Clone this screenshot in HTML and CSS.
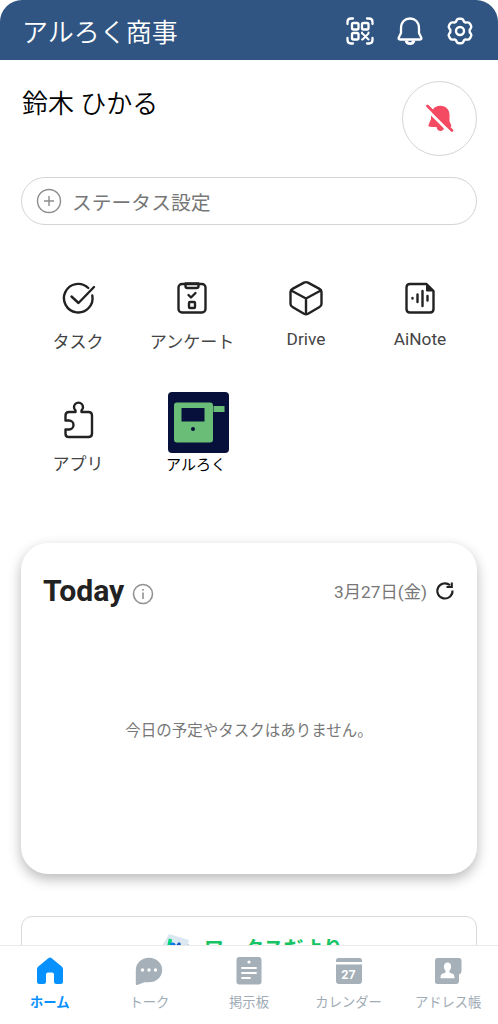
FILE: index.html
```html
<!DOCTYPE html>
<html lang="ja">
<head>
<meta charset="utf-8">
<title>ホーム</title>
<link rel="stylesheet" href="styles.css">
</head>
<body>
<div class="app">
  <header class="topbar">
    <h1 class="company">アルろく商事</h1>
    <div class="actions">
      <svg width="28" height="28" viewBox="0 0 28 28" fill="none" stroke="#fff" stroke-width="2.3" stroke-linecap="round">
        <path d="M1.5 7V5Q1.5 1.5 5 1.5H7M21 1.5h2Q26.500 1.500 26.500 5v2M26.500 21v2Q26.500 26.500 23 26.500h-2M7 26.500H5Q1.500 26.500 1.500 23v-2"/>
        <rect x="6" y="6" width="6.500" height="6.500" rx="1.500"/><rect x="16" y="6" width="6.500" height="6.500" rx="1.500"/><rect x="6" y="16" width="6.500" height="6.500" rx="1.500"/>
        <path stroke-width="2" d="M16 15.500v1M22.500 15.500v1M17 17l5 5M22 17l-5 5M16 22.500h.5M22.500 22.500h.2"/>
      </svg>
      <svg width="28" height="30" viewBox="0 0 28 30" fill="none" stroke="#fff" stroke-width="2.300" stroke-linejoin="round">
        <path d="M5 12.500C5 6 9 2.500 14 2.500S23 6 23 12.500V17l2.200 4.500q.8 2-1.200 2H4q-2 0-1.200-2L5 17Z"/>
        <path class="white" stroke="none" d="M8.500 24.500h11q-1 4.500-5.500 4.500t-5.500-4.500Z"/><path d="M12.500 25.500h3" stroke="#305582" stroke-width="1.300"/>
      </svg>
      <svg width="28" height="28" viewBox="0 0 28 28" fill="none" stroke="#fff" stroke-width="2.400" stroke-linejoin="round">
        <path d="M10.600 3.200Q11.200 1.700 13 1.700h2q1.800 0 2.400 1.500l.6 1.500 1.600.9 1.700-.2q1.700-.2 2.600 1.300l1 1.700q.9 1.600-.2 3l-1 1.400v2.400l1 1.400q1.100 1.400.2 3l-1 1.700q-.9 1.500-2.600 1.300l-1.700-.2-1.600.9-.6 1.500q-.6 1.500-2.400 1.500h-2q-1.800 0-2.400-1.500L10 23.300l-1.600-.9-1.700.2Q5 22.800 4.100 21.300l-1-1.700q-.9-1.600.2-3l1-1.400v-2.400l-1-1.400q-1.100-1.400-.2-3l1-1.700Q5 5.200 6.700 5.400l1.700.2L10 4.700Z"/><circle cx="14" cy="14" r="4"/>
      </svg>
    </div>
  </header>

  <main class="content">
    <section class="profile">
      <h2 class="user">鈴木 ひかる</h2>
      <button class="mute" aria-label="通知オフ">
        <svg width="30" height="30" viewBox="0 0 30 30">
          <path fill="#f44a62" d="M8 5.500C9.500 3 12 1.800 15.500 1.800c5.500 0 9 4 9 9.200v6.500l1.800 3.800q.5 1.700-1.300 1.700H7L4 22.500q-1-.5-.3-2L6 15V10ZM11.500 23h8q-.8 4-4 4t-4-4Z"/>
          <path stroke="#fff" stroke-width="3" d="M1 4.500L25.500 29"/>
          <path stroke="#f44a62" stroke-width="2.800" stroke-linecap="round" d="M2.500 2L27 26.500"/>
        </svg>
      </button>
    </section>

    <div class="status">
      <svg width="26" height="26" viewBox="0 0 26 26" fill="none" stroke="#8c8c8c" stroke-width="1.400"><circle cx="13" cy="13" r="11.500"/><path d="M13 8v10M8 13h10"/></svg>
      <span>ステータス設定</span>
    </div>

    <section class="shortcuts">
      <div class="shortcut">
        <svg class="line" viewBox="0 0 36 36"><path d="M32.300 15.500A14.300 14.300 0 1 1 28.300 8"/><path d="M11.500 16.500l7 6.500L34 7"/></svg>
        <span>タスク</span>
      </div>
      <div class="shortcut">
        <svg class="line" viewBox="0 0 36 36"><rect x="4.500" y="4" width="27" height="28.500" rx="3.500"/><path d="M11.500 3.500v2.500q0 2 2 2h9q2 0 2-2V3.500Z"/><path d="M14.500 15l2.500 2.500 4.500-4.500"/><rect x="15" y="22" width="6" height="6" rx="1"/></svg>
        <span>アンケート</span>
      </div>
      <div class="shortcut">
        <svg class="line" viewBox="0 0 36 36"><path d="M16 2.600q2-1 4 0l11.500 6.300q2 1 2 3V24q0 2-2 3L20 33.800q-2 1-4 0L4.500 27q-2-1-2-3V11.900q0-2 2-3ZM3.200 10.500L18 18.500l14.800-8M18 18.500V34"/></svg>
        <span class="latin">Drive</span>
      </div>
      <div class="shortcut">
        <svg class="line" viewBox="0 0 36 36"><path d="M24.500 4H8Q4.500 4 4.500 7.500v21.500q0 3.500 3.500 3.500h20q3.500 0 3.500-3.500V11Z"/><path fill="#222" stroke-width="1" d="M24.500 4v7h7Z"/><path d="M10.500 18v.5M15.500 14.500v7.500M20.500 11v15M25.500 16v4.500"/></svg>
        <span class="latin">AiNote</span>
      </div>
      <div class="shortcut">
        <svg class="line puzzle" viewBox="0 0 36 42"><path d="M15.500 13v-1.500a4.500 4.500 0 1 1 6 0v1.500h7q3.500 0 3.500 3.500v18q0 3.500-3.500 3.500h-20Q5.500 38 5.500 34.500v-4h3.500a4.500 4.500 0 1 0 0-9H5.500V16.500q0-3.500 3.500-3.500Z"/></svg>
        <span>アプリ</span>
      </div>
      <div class="shortcut shortcut-tile">
        <svg class="tile" viewBox="0 0 61 61"><rect width="61" height="61" rx="4" fill="#06103a"/><rect x="6" y="10.500" width="39" height="40" rx="3" fill="#6abd76"/><rect x="45.500" y="14" width="11" height="6" fill="#6abd76"/><rect x="13.500" y="16" width="23" height="13.500" fill="#06103a"/><circle cx="25" cy="37" r="2" fill="#06103a"/></svg>
        <span class="tile-label">アルろく</span>
      </div>
    </section>

    <section class="today">
      <div class="today-head">
        <h3>Today</h3>
        <svg class="info" width="22" height="22" viewBox="0 0 22 22" fill="none" stroke="#929292" stroke-width="1.600"><circle cx="11" cy="11" r="9.500"/><path d="M11 9.500V16M11 6v1.800"/></svg>
        <span class="date">3月27日(金)</span>
        <svg class="reload" width="20" height="20" viewBox="0 0 20 20" fill="none" stroke="#222" stroke-width="2.100"><path d="M17.500 9.500A7.600 7.600 0 1 1 15 4.300"/><path d="M16.800 1.500V6H11.500"/></svg>
      </div>
      <p class="empty">今日の予定やタスクはありません。</p>
    </section>

    <section class="banner">
      <svg width="34" height="36" viewBox="0 0 34 36"><path fill="#84939e" d="M22 9l10 3-6 24H14Z"/><path fill="#dbe7f1" d="M8 0l20 6-9 28L0 24V14Z"/><path stroke="#00d77b" stroke-width="3.400" d="M9.500 5L7 16"/><path stroke="#087be8" stroke-width="3.200" fill="none" d="M9.500 11q4-3 4 3"/><path stroke="#1459c8" stroke-width="3" d="M19 9l-6 7"/></svg>
      <span>ワークスだより</span>
    </section>
  </main>

  <nav class="tabs">
    <a class="tab active"><svg viewBox="0 0 28 28"><path d="M12.300 1.200q1.700-1.400 3.400 0l10 8.200q1.300 1 1.300 2.800v12.300q0 2.500-2.500 2.500h-4q-2.500 0-2.500-2.500V17.500q0-2-2-2h-4q-2 0-2 2v7q0 2.500-2.500 2.500h-4Q1 27 1 24.500V12.200q0-1.800 1.300-2.800Z"/></svg><span>ホーム</span></a>
    <a class="tab"><svg viewBox="0 0 28 28"><path d="M14 .8a13.200 12.200 0 0 1 0 24.400H9.500L2.200 28Q.8 28.200.8 27V13A13.200 12.200 0 0 1 14 .8Z"/><g fill="#fff"><circle cx="7.500" cy="13" r="1.700"/><circle cx="14" cy="13" r="1.700"/><circle cx="20.500" cy="13" r="1.700"/></g></svg><span>トーク</span></a>
    <a class="tab"><svg viewBox="0 0 28 28"><rect x="1.500" y="0" width="25" height="27.500" rx="3"/><circle cx="14" cy="5" r="1.600" fill="#fff"/><path stroke="#fff" stroke-width="1.900" stroke-linecap="round" d="M7 11h14M7 16h14M7 21h8"/></svg><span>掲示板</span></a>
    <a class="tab"><svg viewBox="0 0 28 28"><path d="M1 5V3.500Q1 1 3.500 1h21Q27 1 27 3.500V5ZM1 7.500h26V24q0 3-3 3H4q-3 0-3-3Z"/><text x="13.500" y="21.500" text-anchor="middle">27</text></svg><span>カレンダー</span></a>
    <a class="tab"><svg viewBox="0 0 28 28"><path d="M3 1h22q2.500 0 2.500 2.500V14.500q0 2-2.500 3V24q0 3-3 3H3.500q-2.500 0-2.500-2.500V3.500Q1 1 3 1Z"/><path fill="#fff" d="M13.500 5.500c2.500 0 3.600 1.800 3.600 4 0 2-.7 3.200-1.600 4v2l3.600 1.500q1.400.8 1.400 3.500v.8h-14v-.8q0-2.700 1.400-3.500l3.600-1.500v-2c-.9-.8-1.600-2-1.600-4 0-2.200 1.100-4 3.600-4Z"/></svg><span>アドレス帳</span></a>
  </nav>
</div>
</body>
</html>
```
FILE: styles.css
```css
* { box-sizing: border-box; }
body {
  margin: 0;
  background: #fff;
  color: #000;
  font-family: Roboto, "Noto Sans CJK JP", sans-serif;
}
h1, h2, h3, p { margin: 0; font-weight: 400; }
svg { display: block; flex: none; }
span { white-space: nowrap; }

.app { height: 1024px; display: flex; flex-direction: column; overflow: hidden; }

.topbar {
  flex: none;
  height: 60px;
  padding: 2px 24px 0 22px;
  display: flex;
  align-items: center;
  justify-content: space-between;
  background: #305582;
  border-radius: 22px 22px 0 0;
  color: #fff;
}
.company { font-size: 26px; font-weight: 350; line-height: 40px; font-family: "Noto Sans CJK JP", sans-serif; }
.actions { display: flex; align-items: center; gap: 22px; }
.white { fill: #fff; }

.content { flex: 1; min-height: 0; overflow: hidden; padding: 21px 21px 0; }
.profile { display: flex; justify-content: space-between; height: 75px; }
.user { font-size: 26px; line-height: 46px; font-weight: 350; padding-left: 1px; }
.mute {
  width: 75px;
  height: 75px;
  padding: 0;
  display: grid;
  place-items: center;
  border: 1px solid #d5d5d5;
  border-radius: 50%;
  background: #fff;
}
.status {
  display: flex;
  align-items: center;
  gap: 10px;
  height: 48px;
  margin-top: 21px;
  padding: 0 14px;
  border: 1px solid #d5d5d5;
  border-radius: 24px;
  color: #777;
  font-size: 19.8px;
}

.shortcuts {
  display: grid;
  grid-template-columns: repeat(4, 114px);
  grid-template-rows: 122px 122px;
  margin-top: 45px;
}
.shortcut {
  display: flex;
  flex-direction: column;
  align-items: center;
  padding-top: 10px;
  color: #444;
  font-size: 17px;
  line-height: 24px;
}
.shortcut span { margin-top: 14px; }
.shortcut .latin { margin-top: 11px; font-size: 17.3px; }
.line {
  width: 36px;
  height: 36px;
  fill: none;
  stroke: #222;
  stroke-width: 2.4;
  stroke-linecap: round;
  stroke-linejoin: round;
}
.shortcut .puzzle { height: 42px; margin: -3px 0 -3px; }
.tile { width: 61px; height: 61px; margin-top: -10px; }
.shortcut-tile { padding-left: 12px; }
.shortcut .tile-label { margin: 0 0 0 -4px; color: #000; font-size: 15px; }

.today {
  height: 331px;
  margin-top: 29px;
  padding: 30px 22px;
  border-radius: 27px;
  background: #fff;
  box-shadow: 0 5px 13px rgba(0, 0, 0, .28);
}
.today-head { display: flex; align-items: center; height: 36px; }
.today h3 { font-size: 30.2px; font-weight: 700; line-height: 36px; color: #222; }
.info { margin: 5px 0 0 8px; }
.date { margin-left: auto; font-size: 17.3px; line-height: 26px; color: #777; padding-top: 2px; }
.reload { margin-left: 8px; }
.empty { margin-top: 110px; text-align: center; font-size: 15.5px; line-height: 24px; color: #777; }

.banner {
  display: flex;
  justify-content: center;
  gap: 9px;
  height: 90px;
  margin-top: 42px;
  padding: 17px 0 0 6px;
  border: 1px solid #d9d9d9;
  border-radius: 11px;
  color: #16c464;
  font-size: 20px;
  font-weight: 700;
  line-height: 31px;
}

.tabs {
  flex: none;
  height: 79px;
  display: grid;
  grid-template-columns: repeat(5, 1fr);
  border-top: 1px solid #e9e9e9;
  background: #fff;
}
.tab {
  display: flex;
  flex-direction: column;
  align-items: center;
  gap: 8px;
  padding-top: 11px;
  fill: #a5b0b9;
  color: #a0abb5;
  font-size: 13.3px;
  line-height: 20px;
}
.tab svg { width: 28px; height: 28px; }
.tab text { fill: #fff; font-size: 12.5px; font-weight: 700; }
.active { fill: #0791ff; color: #0791ff; font-weight: 700; }
```
